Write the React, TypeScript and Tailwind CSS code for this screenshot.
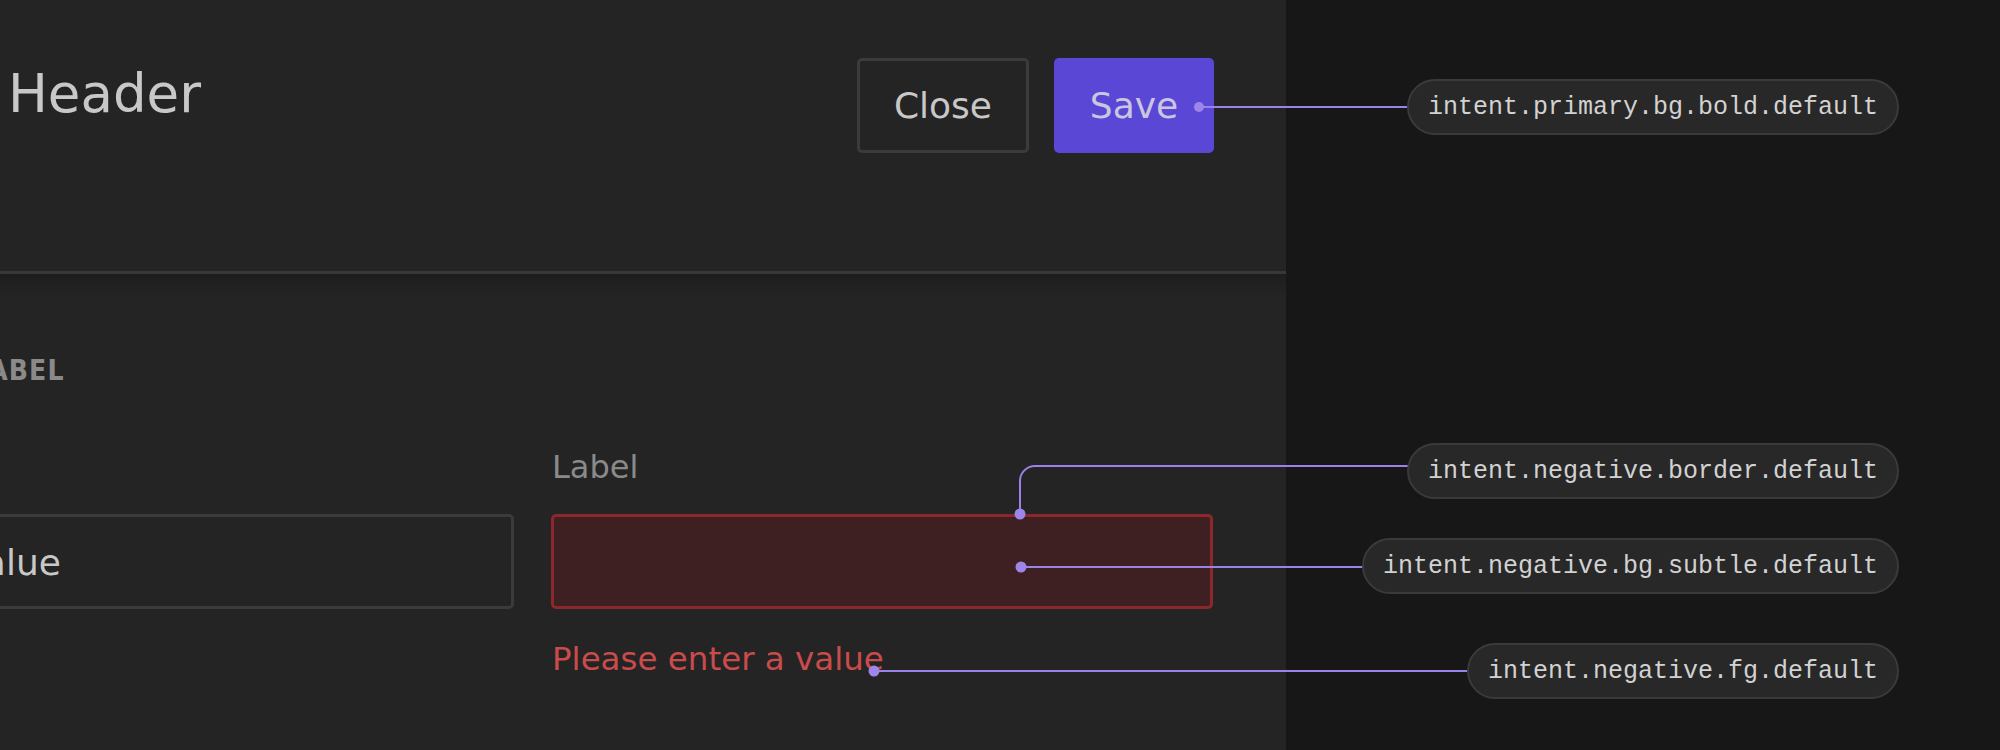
const sans = { fontFamily: "'DejaVu Sans', 'Open Sans', sans-serif" };

function Pill({ text, className }: { text: string; className: string }) {
  return (
    <div
      className={`absolute right-[101px] h-[56px] px-[19px] flex items-center rounded-full border-2 border-[#3a3a3a] bg-[#282828] text-[25px] leading-none text-[#d2d2d2] ${className}`}
      style={{ fontFamily: "'Liberation Mono', 'DejaVu Sans Mono', monospace" }}
    >
      {text}
    </div>
  );
}

export default function App() {
  return (
    <div className="relative w-[2000px] h-[750px] overflow-hidden flex bg-[#171717]" style={sans}>
      {/* dialog panel, cropped on the left */}
      <div className="w-[1286px] shrink-0 h-full bg-[#242424] flex flex-col overflow-hidden">
        <div className="h-[271px] shrink-0 flex items-start justify-between pl-[8px] pr-[72px]">
          <h1 className="mt-[67px] text-[53px] leading-none text-[#c8c8c8] font-normal">Header</h1>
          <div className="mt-[58px] flex gap-[25px]">
            <button className="h-[95px] w-[172px] rounded-[5px] border-[3px] border-[#3b3b3b] text-[36px] leading-none text-[#c8c8c8]">
              Close
            </button>
            <button className="h-[95px] w-[160px] rounded-[5px] bg-[#5a47d6] text-[36px] leading-none text-[#c9c6df]">
              Save
            </button>
          </div>
        </div>
        <div className="h-[3px] shrink-0 bg-[#383838]" />
        <div className="relative flex-1 flex flex-col">
          <div className="absolute top-0 left-0 right-0 h-[22px] bg-gradient-to-b from-[#1d1d1d] to-transparent" />
          <div className="mt-[83px] ml-[-29px] text-[28px] leading-none font-bold font-stretch-condensed tracking-[0.04em] text-[#8a8a8a]">
            LABEL
          </div>
          <div className="mt-[66px] ml-[-148px] flex gap-[37px]">
            <div className="w-[662px] shrink-0 flex flex-col">
              <div className="h-[32px] text-[32px] leading-none text-[#8a8a8a]">Label</div>
              <div className="mt-[31px] h-[95px] rounded-[5px] border-[3px] border-[#3b3b3b] flex items-center pl-[107px] pt-[2px] text-[36px] leading-none text-[#c8c8c8]">
                Value
              </div>
            </div>
            <div className="w-[662px] shrink-0 flex flex-col">
              <div className="h-[32px] text-[32px] leading-none text-[#8a8a8a] pl-[1px]">Label</div>
              <div className="mt-[31px] h-[95px] rounded-[5px] border-[3px] border-[#8c282c] bg-[#3e2022]" />
              <div className="mt-[34px] text-[32.5px] leading-none text-[#c94b4b] pl-[1px]">Please enter a value</div>
            </div>
          </div>
        </div>
      </div>
      <div className="flex-1" />

      {/* annotation leaders */}
      <svg className="absolute inset-0 pointer-events-none" width="2000" height="750" viewBox="0 0 2000 750">
        <g stroke="#9b82e8" strokeWidth="2" fill="none">
          <path d="M1199 107 H1408" />
          <path d="M1020 514 V481 A15 15 0 0 1 1035 466 H1408" />
          <path d="M1021 567 H1365" />
          <path d="M874 671 H1468" />
        </g>
        <g fill="#9d85ea">
          <circle cx="1199" cy="107" r="5" />
          <circle cx="1020" cy="514" r="5.5" />
          <circle cx="1021" cy="567" r="5.5" />
          <circle cx="874" cy="671" r="5.5" />
        </g>
      </svg>

      <Pill text="intent.primary.bg.bold.default" className="top-[79px]" />
      <Pill text="intent.negative.border.default" className="top-[443px]" />
      <Pill text="intent.negative.bg.subtle.default" className="top-[538px]" />
      <Pill text="intent.negative.fg.default" className="top-[643px]" />
    </div>
  );
}
